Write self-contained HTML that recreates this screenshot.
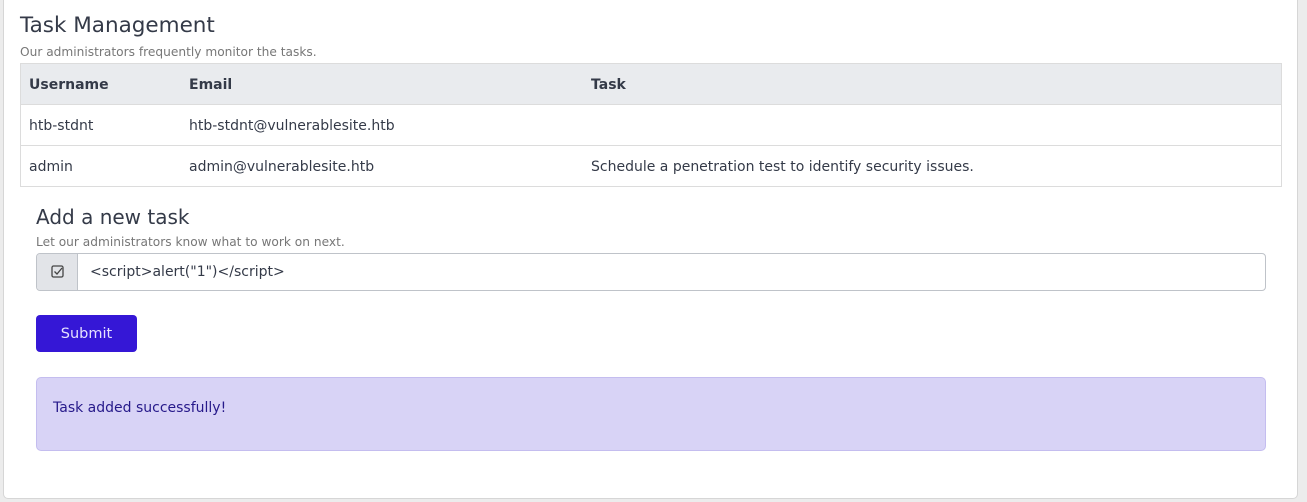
<!DOCTYPE html>
<html><head><style>
body{margin:0;background:#ececec;font-family:"DejaVu Sans","Liberation Sans",sans-serif;color:#343a48;width:1307px;height:502px;overflow:hidden;position:relative}
.card{position:absolute;left:3px;top:-5px;width:1293px;height:502px;background:#fff;border:1px solid #d6d6d6;border-radius:5px}
.a{position:absolute;white-space:nowrap}
table{position:absolute;left:20px;top:63px;width:1262px;border-collapse:collapse;font-size:14px;border:1px solid #dcdcdc}
td,th{border-top:1px solid #dcdcdc;height:38px;padding:2px 0 0 8px;text-align:left;vertical-align:middle;box-sizing:content-box}
th{background:#e9ebee;font-weight:bold}
</style></head><body>
<div class="card"></div>
<div class="a" style="left:20px;top:13px;font-size:21.5px">Task Management</div>
<div class="a" style="left:20px;top:45px;font-size:12.2px;color:#777">Our administrators frequently monitor the tasks.</div>
<table>
<tr><th style="width:152px">Username</th><th style="width:394px">Email</th><th>Task</th></tr>
<tr><td>htb-stdnt</td><td>htb-stdnt@vulnerablesite.htb</td><td></td></tr>
<tr><td>admin</td><td>admin@vulnerablesite.htb</td><td>Schedule a penetration test to identify security issues.</td></tr>
</table>
<div class="a" style="left:36px;top:205px;font-size:20px">Add a new task</div>
<div class="a" style="left:36px;top:235px;font-size:12.2px;color:#777">Let our administrators know what to work on next.</div>
<div class="a" style="left:36px;top:253px;width:1228px;height:36px;border:1px solid #bfc3c9;border-radius:4px;overflow:hidden">
<div class="a" style="left:0;top:0;width:40px;height:36px;background:#e2e4e8;border-right:1px solid #bfc3c9">
<svg width="40" height="36" viewBox="0 0 40 36"><rect x="15" y="12" width="11" height="11" rx="1.5" fill="none" stroke="#444" stroke-width="1.3"/><path d="M17.5 17.5l2.5 2.5 5-6" fill="none" stroke="#444" stroke-width="1.3"/></svg></div>
<div class="a" style="left:53px;top:10px;font-size:14px">&lt;script&gt;alert("1")&lt;/script&gt;</div>
</div>
<div class="a" style="left:36px;top:315px;width:101px;height:37px;background:#3517d6;border-radius:4px;color:#e6e2ff;font-size:14.5px;text-align:center;line-height:39px">Submit</div>
<div class="a" style="left:36px;top:377px;width:1228px;height:72px;background:#d8d3f6;border:1px solid #c4bdef;border-radius:5px">
<div class="a" style="left:16px;top:22px;font-size:14px;color:#26198a">Task added successfully!</div></div>
</body></html>
